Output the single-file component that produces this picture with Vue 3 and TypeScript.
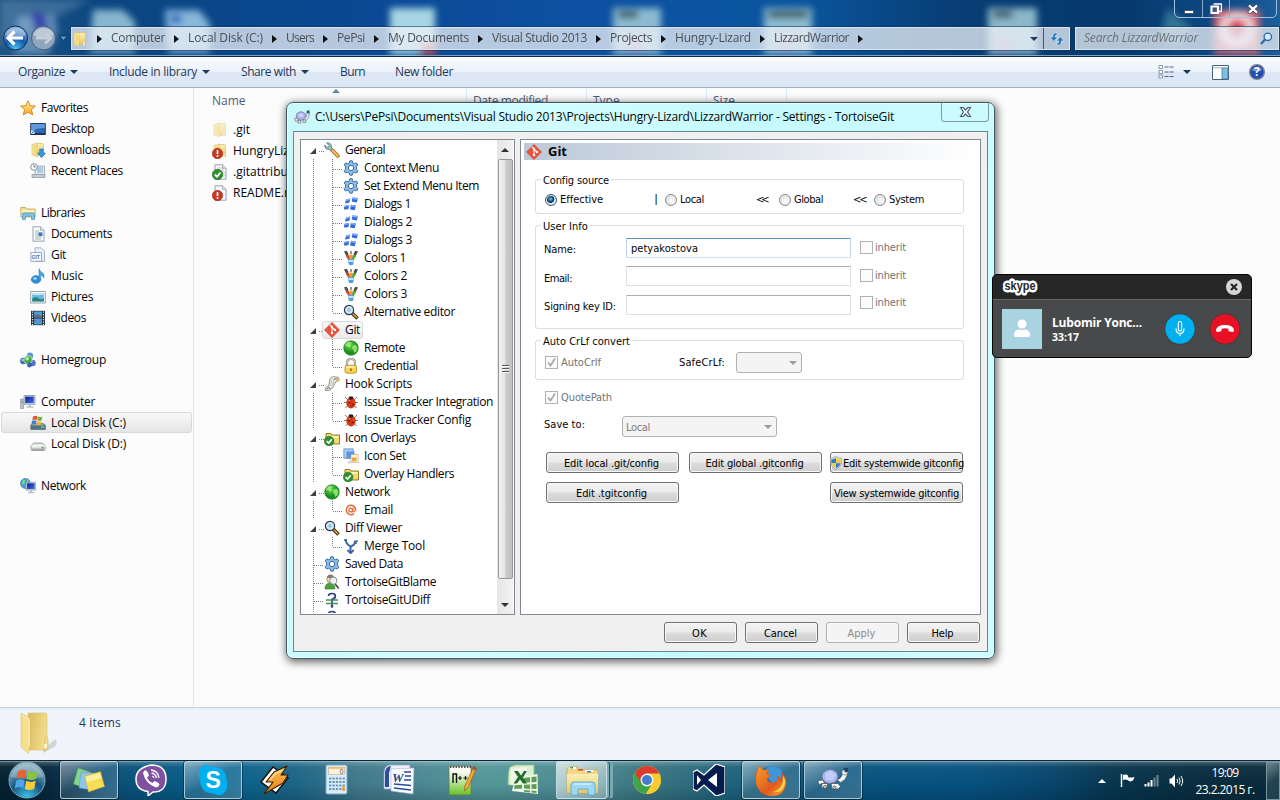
<script setup lang="ts">
import type { Directive } from 'vue'

/* Spreads a label's letters so that its ink fills the given cell, less one pixel of side bearing. */
const vFit: Directive<HTMLElement, number> = {
  mounted(el, { value }) {
    const count = (el.textContent ?? '').length
    if (value && count) {
      el.style.letterSpacing = (value - 1 - el.getBoundingClientRect().width) / count + 'px'
    }
  },
}

const folder =
  '<path d="M2 2.5 7.5 1v13.5L2 13z" fill="#f7e9a0" stroke="#d9c069" stroke-width=".6"/><path d="M7 1.5h5.5q1 0 1 1V13.500H7z" fill="url(#gFolder)" stroke="#d6b95c" stroke-width=".6"/><path d="M3.300 2.800 7 4.300V15.200L3.300 13.500z" fill="#f1d980"/><path d="M12 11v3.500" stroke="#fff" stroke-width="1"/>'
const alertBadge =
  '<circle cx="5.500" cy="10.500" r="5.200" fill="#c93a22" stroke="#9b2413" stroke-width=".6"/><path d="M5.500 7v4" stroke="#fff" stroke-width="1.700"/><circle cx="5.500" cy="13" r="1" fill="#fff"/>'
const okBadge =
  '<circle cx="5.500" cy="10.500" r="5.200" fill="#2f9130" stroke="#1a6a1d" stroke-width=".6"/><path d="M2.800 10.500 5 12.700 8.400 8.500" fill="none" stroke="#fff" stroke-width="1.800"/>'
const gear =
  '<path d="M6.800.8h2.400l.5 2.200 1.500.8 2.200-.8 1.300 2.100-1.300 1.700v2.400l1.500 1.500-1.200 2.100-2.300-.5-1.700.9-.6 2H6.900l-.6-2-1.700-.9-2.300.5-1.200-2.100 1.500-1.500V6.800L1.300 5.100 2.600 3l2.200.8L6.300 3z" fill="#8fbce8" stroke="#386ba6" stroke-width="1"/><circle cx="8" cy="8" r="2.700" fill="#fff" stroke="#386ba6"/>'
const dialogs =
  '<g fill="#3568dc"><path d="M3 3.500 7.300 2.500 6.300 6.800 2 7.500zM9.300 1.500l5.700.6-1.200 4.300-5-.8zM1.500 9.800l4.800-.8-1 4.200-4.500.4zM8 8.800l5 .8-1.300 4.600-4.700-.8z"/><path d="M3 3.500l4.300-1-.3 1.500-4.300.9zM9.300 1.500l5.700.6-.4 1.700-5.600-.7zM8 8.800l5 .8-.4 1.400-5-.7zM1.500 9.800l4.800-.8-.3 1.300-4.800.7z" fill="#86b0fb"/></g>'
const colors =
  '<path d="M1 1.500 3 .8l3.500 6-2.500 1zM15 1.500 13 .8 9.500 6.800l2.500 1z" fill="#5d5244"/><path d="M3.300 1 5 4M12.700 1 11 4M8 1v3" stroke="#333"/><path d="M3 5.500 6 4.700 7.500 10l-2 .5z" fill="#e2432e"/><path d="M6.500 4.500h3V10h-3z" fill="#f3a32b"/><path d="M13 5.500 10 4.700 8.500 10l2 .5z" fill="#58a935"/><path d="M4.800 9h6.400l-1 5.500q-2.200 1.300-4.400 0z" fill="#4f9de3"/><path d="M5.500 11h5" stroke="#d8efff" stroke-width="1.800"/>'
const magnifier =
  '<path d="m9 9 5.500 5.500" stroke="#35270c" stroke-width="3.600"/><path d="m9.500 9.500 4.500 4.300" stroke="#d9a23c" stroke-width="1.700"/><circle cx="6" cy="6" r="4.600" fill="#cfe8f7" stroke="#27394b" stroke-width="1.200"/><path d="M4 6h4M6 4v4" stroke="#6fa2c8" stroke-dasharray="1 .6"/>'
const gitLogo =
  '<path d="M8 .3 15.700 8 8 15.700.3 8z" fill="#e9533a" stroke="#cf4630" stroke-width=".4"/><path d="M5.700 2.700 8 5v6M8.300 5.500 11 8" stroke="#fff" stroke-width="1.100" fill="none"/><circle cx="8" cy="5" r="1.200" fill="#fff"/><circle cx="8" cy="11" r="1.200" fill="#fff"/><circle cx="10.900" cy="7.900" r="1.200" fill="#fff"/>'
const globe =
  '<circle cx="8" cy="8" r="7.300" fill="url(#gGlobe)" stroke="#1b7a18" stroke-width=".6"/><path d="M4 2.500q3-1 4.500.500L7 5l1 1.500-2.500 1L4 6 2 6.500q0-2.500 2-4zM9.500 6l3-1.500 2 3-1 4-2.500 1.500-.5-3L9 8.500z" fill="#a4f07c" opacity=".8"/>'
const bug =
  '<path d="M2 3l3 3M14 3l-3 3M1 8.500h3.500M15 8.500h-3.500M2.500 14 5 11M13.500 14 11 11" stroke="#6b5850" stroke-width=".8"/><ellipse cx="8" cy="9" rx="4.800" ry="5.400" fill="#dc3e1a"/><ellipse cx="8" cy="4" rx="2.600" ry="1.800" fill="#2c2220"/><path d="M8 5v9" stroke="#9d2610" stroke-width=".7"/><circle cx="6" cy="8.500" r=".9" fill="#5b1408"/><circle cx="10" cy="10.500" r=".9" fill="#5b1408"/><circle cx="6.500" cy="6.700" r=".8" fill="#ff9a7a"/>'
const folderOk =
  '<path d="M2 3.500h5l1 1.500h7.500v9H2z" fill="#f3d976" stroke="#8d6d14" stroke-width=".9"/><path d="M3 6h11.500v1.800H3z" fill="#fff3bb"/><g transform="translate(0 1.300) scale(.93)">' +
  okBadge +
  '</g>'
const page = '<path d="M3 .8h7.500L14 4.300v10.900H3z" fill="#fdfdfe" stroke="#8a97a6" stroke-width=".9"/><path d="M10.500.8v3.500H14" fill="#dfe6ee" stroke="#8a97a6" stroke-width=".7"/>'
const monitor =
  '<path d="M4 1.500h11v8.800H4z" fill="#d6dbe2" stroke="#7c8895" stroke-width=".7"/><path d="M5.200 2.600h8.600v6.500H5.200z" fill="url(#gScreen)"/><path d="M8.500 10.300h2.500v2.200H8.500zM6.500 12.500h7v1.300h-7z" fill="#b6bec8"/>'

const icons: Record<string, string> = {
  folder,
  gear,
  dialogs,
  colors,
  magnifier,
  gitLogo,
  globe,
  bug,
  folderOk,
  star: '<path d="M8 .8 10.100 5.600l5.300.5-4 3.500 1.300 5.300L8 12.100l-4.700 2.800 1.300-5.300-4-3.500 5.300-.5z" fill="url(#gStar)" stroke="#e08a1e" stroke-width="1"/>',
  desktop:
    '<path d="M.7 2.500h14.600v11H.7z" fill="#2f68ba" stroke="#2b3c55" stroke-width="1"/><path d="M1.200 3h13.600v4Q8 6.500 1.200 10z" fill="#5f9ade"/><path d="M.7 12.300h14.600v1.700H.7z" fill="#1e2c40"/><path d="M1 9.500h3.500V13H1z" fill="#cfe2f7"/><path d="M1.800 12.200l2-2" stroke="#2563b4"/>',
  downloads: folder + '<path d="M9.700 7h3.600v4h2.200l-4 4.700-4-4.700h2.200z" fill="#2d9be0" stroke="#156ba8" stroke-width=".6"/>',
  recent:
    '<path d="M5 3h9.500v9H5z" fill="#e9eef4" stroke="#8e9aa8" stroke-width=".8"/><path d="M7 5h6M7 7h6M7 9h6" stroke="#6ea6d0"/><path d="M2 11.500h13v3H2z" fill="#c6cdd5" stroke="#838e9a" stroke-width=".7"/><circle cx="4" cy="4" r="3.300" fill="#f8fafc" stroke="#8592a0"/><path d="M4 2v2h1.500" stroke="#555" stroke-width=".8" fill="none"/>',
  libraries:
    '<path d="M.8 2.500h5L7 4h8.200v8H.8z" fill="#f3df8f" stroke="#c4a149" stroke-width=".8"/><path d="M1.500 5h13v2h-13z" fill="#fbf1bd"/><path d="M2.500 14.500v-5q0-1.500 1.500-1.500h9q1.500 0 1.500 1.500v5h-3v-3.300h-6v3.300z" fill="#7cc4ea" stroke="#3f93c4" stroke-width=".7"/>',
  documents: page + '<path d="M5 5h4M5 7h7M5 9h3M5 11h7M5 13h6" stroke="#8c99a9" stroke-width=".8"/><path d="M8.500 6.500h4v3.500h-4z" fill="#3579c1"/>',
  git: '<path d="M5 .8h6L14.500 4v10.500H5z" fill="#e6eef8" stroke="#8ba4c4" stroke-width=".8"/><path d="M.8 5.500h10.700v8.800H.8z" fill="#f6f9fd" stroke="#7f9ac0" stroke-width=".8"/><text x="1.400" y="12" font-size="5.200" font-weight="bold" fill="#5878a8" font-family="Liberation Sans, sans-serif">GIT</text>',
  music:
    '<ellipse cx="6" cy="11.500" rx="4.700" ry="3.900" fill="#2b90da" stroke="#1769a8" stroke-width=".5"/><path d="M9 12V.6q1 3 3.700 4.400 2.500 1.500.8 5-.5-2.500-2.800-3V12z" fill="#45a6e6" stroke="#1769a8" stroke-width=".4"/><ellipse cx="5" cy="10.500" rx="2" ry="1.200" fill="#9dd6fa"/>',
  pictures:
    '<path d="M.7 2.500h14.600v11.500H.7z" fill="#fff" stroke="#8a97a6" stroke-width=".9"/><path d="M2.200 4h11.600v8.500H2.200z" fill="#65b8e8"/><path d="M2.200 9.500Q6 7 9 9.500t4.800-1v4H2.200z" fill="#2c8379"/><path d="M2.200 5.500q4 1.500 11.600 0V4H2.200z" fill="#c4e7fa"/>',
  videos:
    '<path d="M1 .8h14v14.400H1z" fill="#22303c"/><path d="M4 1.500h8v6H4zM4 8.500h8v6H4z" fill="#4e9bd8"/><path d="M4 5.500q4-3 8 1v1H4zM4 9q4 5 8 1v1.500H4z" fill="#7c4a44" opacity=".6"/><path d="M2.500 1.500v14M13.500 1.500v14" stroke="#e9eef2" stroke-dasharray="1.300 1.200" stroke-width="1.200"/>',
  homegroup:
    '<circle cx="10" cy="3.700" r="3.200" fill="#5a9bd8"/><circle cx="3.300" cy="9" r="3.200" fill="#3970bd"/><circle cx="12.500" cy="11" r="3.200" fill="#5272c8"/><circle cx="8" cy="8" r="4.200" fill="#46a846" stroke="#e9f5ee" stroke-width=".7"/><circle cx="7.200" cy="6.700" r="1.700" fill="#b9efa7"/><circle cx="9.500" cy="13" r="2.400" fill="#4160b4"/><circle cx="2.500" cy="8" r="1" fill="#bcdcff"/>',
  computer: monitor + '<path d="M.6 5h3v9.500h-3z" fill="#bcc5ce" stroke="#7c8895" stroke-width=".6"/><path d="M1.500 7h1v2h-1z" fill="#45b045"/>',
  diskC:
    '<path d="M.8 10 3 8.500h10L15.300 10v4.500H.8z" fill="#8ca0ac" stroke="#5c6d78" stroke-width=".7"/><path d="M.8 10.500h14.500v3.800H.8z" fill="#4d7683"/><path d="M11 12h3" stroke="#85e368" stroke-width="1.300"/><path d="M3 1.500q2.300-1.500 4.500-.2L6.800 5q-2-1-4.500.3z" fill="#e3572b"/><path d="M8 1.500q2 1 4.300.2L11.500 5.500q-2 .8-4.200-.2z" fill="#6eb33d"/><path d="M2 6q2.300-1.300 4.500-.2L5.900 9.300q-2-1-4.500.2z" fill="#3e82d4"/><path d="M7 6q2 1 4.300.2L10.600 9.700q-2 .7-4.200-.3z" fill="#f1b92c"/>',
  diskD:
    '<path d="M1 9.500 4 7h8l3 2.500v4q0 1-1 1H2q-1 0-1-1z" fill="#e3e5e4" stroke="#888d8d" stroke-width=".8"/><path d="M1 9.800h14" stroke="#fff"/><path d="M2 13.200h12" stroke="#9ba0a0" stroke-width="1.300"/><path d="M11.500 11.500h2" stroke="#58a038" stroke-width="1.500"/>',
  network:
    '<circle cx="5.500" cy="5.500" r="5" fill="#45a2d4" stroke="#2270a4" stroke-width=".6"/><path d="M3 1.500q3 1 1.500 3.500L2 7zM6 1q3 1 3 3L7 3z" fill="#85dc76"/><g transform="translate(2.500 3) scale(.88)">' +
    monitor +
    '</g>',
  file: page,
  fileOk: page + '<path d="M5 4h7M5 6h7M8 8h5M9 10h4M9 12h4" stroke="#a3abb4" stroke-width=".7"/>' + okBadge,
  fileAlert: page + alertBadge,
  folderAlert: folder + alertBadge,
  wrench:
    '<path d="M2.500.8 5 3.300 4.700 5 3 5.300.7 3Q.5 7.800 5.300 7.600L8 10l2-2-2.500-2.600Q8 .5 2.500.8z" fill="#9cc0c9" stroke="#4d7f8c" stroke-width=".8"/><path d="m8.500 8.500 5.300 5.300" stroke="#a56c1a" stroke-width="3.800" stroke-linecap="round"/><path d="m8.500 8.500 5.200 5.200" stroke="#f2b96a" stroke-width="2.300" stroke-linecap="round"/>',
  lock: '<path d="M4 8V5q0-4 4.200-4Q12 1 12 5v3" fill="none" stroke="#8c8c84" stroke-width="2.200"/><path d="M4 8V5q0-4 4.200-4Q12 1 12 5v3" fill="none" stroke="#deded4" stroke-width=".9"/><rect x="2" y="7.200" width="11.500" height="8" rx="2" fill="#f6d45a" stroke="#b38a1b" stroke-width=".8"/><path d="M3.500 9h8" stroke="#fff4b4" stroke-width="1.400"/><path d="M8 10.500v2.500" stroke="#8a6410" stroke-width="1.500"/>',
  script:
    '<path d="M6 2.500Q8-.5 14.500 1.500 16 5 12 5.500L8.500 12Q6 15.500 1.500 14.500.5 10.500 4.500 10.500z" fill="#e9e7e0" stroke="#85827a" stroke-width=".8"/><path d="M9.500 3.500q3-1.500 4.500 0M2.500 13q2-2 4-.5" fill="none" stroke="#75716a"/><path d="M8 4.500 6 9.500M10 5 8 9.500" stroke="#b8b4aa" stroke-width=".8"/><circle cx="14" cy="4" r="1.600" fill="#e0b25a"/>',
  iconSet:
    '<path d="M.8.800h9.500v9.500H.8z" fill="#a7c8f3" stroke="#7197cf" stroke-width=".8"/><path d="M3.500 3.500h8v7h-8z" fill="#5f94e0"/><path d="M8 6.500h7.200v8H8z" fill="#fff5dd" stroke="#b5a07a" stroke-width=".6"/><path d="M9 9.500h4.500v3.800H9z" fill="#f1a336"/><path d="M5 12.500l3 1.500v1.500H5z" fill="#c4d4ea"/>',
  at: '<circle cx="8" cy="8" r="4.600" fill="none" stroke="#e56a3e" stroke-width="1.600" stroke-dasharray="25 4" transform="rotate(50 8 8)"/><ellipse cx="7.700" cy="8" rx="1.800" ry="1.900" fill="none" stroke="#e56a3e" stroke-width="1.300"/><path d="m10.200 5.800-.6 3.500q.8 1.200 2.500-.5" fill="none" stroke="#e56a3e" stroke-width="1.300"/>',
  merge:
    '<path d="M2.500 1.500Q3 6 7.500 8.500V14M12.500 3.500Q12 6.500 8 8.500" fill="none" stroke="#3c66a2" stroke-width="2"/><path d="M4.500 12l3.100 3.200L10.700 12" fill="none" stroke="#3c66a2" stroke-width="1.800"/><path d="M1 2h3M11 3.500l4-.5M13 3v3" stroke="#3c66a2" stroke-width="1.300"/>',
  blame:
    '<path d="M1 15q0-6 5-6t5 6z" fill="#48a33c" stroke="#2d7526" stroke-width=".6"/><circle cx="6.500" cy="5" r="3.700" fill="#f2d9b8" stroke="#967248" stroke-width=".7"/><path d="M3 4q1-4 4-3.300Q10 1 10 4z" fill="#8b7a62"/><path d="m11.200 10 3.500 4.500" stroke="#444" stroke-width="1.600"/><circle cx="9.300" cy="6.700" r="3.600" fill="#eef6fb" fill-opacity=".85" stroke="#75808a" stroke-width=".9"/>',
  udiff:
    '<path d="M4.500 4Q4.500 1.500 8 1.500T11.300 4.500Q11 6.500 8 7.300V14M8 9v6" fill="none" stroke="#2c3c90" stroke-width="1.700"/><path d="M2 8h12M2 11.500h12" stroke="#3f9257" stroke-width="1.500"/><circle cx="8" cy="14.500" r="1.300" fill="#2c3c90"/>',
  turtle:
    '<ellipse cx="7" cy="7" rx="4.800" ry="4.200" fill="#a9b1e6" stroke="#6970a8" stroke-width=".7"/><path d="M10.500 9.500q2.500-1 2.500-6h2.500q.5 5-3.500 8z" fill="#e4e8ee" stroke="#73777d" stroke-width=".6"/><path d="M12.700 1.500h2.800v2.800h-2.800z" fill="#23577a"/><path d="M.5 9.500 3.500 9l1 2.500-3 1zM4 11.500h2.800V14H4zM9 11h2.800v2.500H9z" fill="#e4e6ea" stroke="#666" stroke-width=".6"/><path d="M4.500 5 8.500 4l1.300 3.700L5 8.500z" fill="#c9cff5"/>',
  shield:
    '<path d="M8 .6Q11 2.600 14.500 2.600 15 12 8 15.600 1 12 1.500 2.600 5 2.600 8 .6z" fill="#e6ebef" stroke="#84909a" stroke-width=".8"/><path d="M8 2.200v6H2.700Q2.400 6 2.700 3.900 5.800 3.800 8 2.200z" fill="#2d7dcb"/><path d="M8 2.200q2.200 1.600 5.300 1.700.3 2.100 0 4.300H8z" fill="#f6ce33"/><path d="M2.700 8.200H8v6Q3.800 12 2.700 8.200z" fill="#f6ce33"/><path d="M13.300 8.200H8v6q4.200-2.200 5.300-6z" fill="#2d7dcb"/>',
}

const large: Record<string, string> = {
  notes:
    '<path d="M5 4 17 8 12 24 .5 20z" fill="#86d58c" stroke="#4c9f58" stroke-width=".4"/><path d="M8 8 21 9 19 26 6 24z" fill="#8dc4f2" stroke="#4d87bb" stroke-width=".4"/><path d="m11.500 12 16-4.500 4 15L15.500 28z" fill="#f7dd55" stroke="#c9a62e" stroke-width=".5"/><path d="m12.500 13 14.500-4 1.500 5-14.500 4z" fill="#fdf0a4"/>',
  viber:
    '<path d="M16 1C26 1 31 5 31 15s-5 13-13 13l-5 4v-4.500Q1 26 1 15T16 1z" fill="#7d51a0" stroke="#fff" stroke-width="1.500"/><path d="M9 7q2-2 3.500 1l1.500 3q0 1-2 2.500 1.500 4 5.500 5.500l2-2q3 .8 5 3-.5 3-3.500 3.500Q10.500 20 8 9z" fill="#fff"/><path d="M16 6q7 .5 8 8M16.500 9q4 .5 5 5M17 12q1.500.5 2 2" fill="none" stroke="#fff" stroke-width="1.300"/>',
  skype:
    '<path d="M8 1q4 0 6 2 15-1 15.500 13 3 9-4 14.500-4 1.500-8-.8Q4 30 3 16-1 4 8 1z" fill="#00aff0"/><text x="16.200" y="24" text-anchor="middle" font-size="23" font-weight="bold" fill="#fff" font-family="Liberation Sans, sans-serif">S</text>',
  winamp:
    '<path d="M14 3 29 14 17 29 2 18z" fill="#fff" stroke="#111" stroke-width="1.500"/><path d="m28 2-13 6-8 10 7 0L5 30l19-11 5-8-7 0z" fill="url(#gBolt)" stroke="#3b2000" stroke-width="1.200" stroke-linejoin="round"/><path d="m24 6-8 4-5 6" stroke="#ffd993" stroke-width="1.700" fill="none"/>',
  calc: '<rect x="5" y="1" width="21" height="29" rx="1.500" fill="#dcecf7" stroke="#7ba6c8"/><rect x="7.500" y="3.500" width="16" height="7" fill="#fff2dc" stroke="#b9a88c" stroke-width=".6"/><path d="M7.500 4h16" stroke="#f2b76a" stroke-width="1.600"/><text x="18.500" y="10" font-size="7" fill="#555" font-family="Liberation Sans, sans-serif">0</text><path d="M8 14.500h16M8 18h16M8 21.500h16M8 25h16" stroke="#6797bf" stroke-width="2.200" stroke-dasharray="2.300 1.100"/><path d="M22.500 22v5" stroke="#f0a332" stroke-width="2.500"/>',
  word: '<path d="M6 1h21v24H1V9q0-6 5-8z" fill="#eef3fa" stroke="#8ba0c3" stroke-width=".8"/><path d="M2 8q1-6 6-6l-2 7v14H2z" fill="#2c4d9f"/><path d="m8 5 23-1-1 26-22-3z" fill="#fbfcfe" stroke="#a7b4cc" stroke-width=".6"/><path d="M21 8h7M22 12h6M21 16h7M11 20l17 1.500M11 24l17 2" stroke="#2b4a92" stroke-width="1.700"/><text x="9" y="17.500" font-size="13" font-weight="bold" font-style="italic" fill="#28488f" font-family="Liberation Serif, serif">W</text>',
  notepad:
    '<path d="M4 2h22v29H4z" fill="url(#gPad)" stroke="#66774d" stroke-width=".8"/><path d="M5 3h21" stroke="#555" stroke-width="2" stroke-dasharray="1.500 1.300"/><path d="M8 19v-9h3.500v9" fill="none" stroke="#111" stroke-width="1.400"/><path d="M13 14h4m-2-2v4M18.500 14h4m-2-2v4" stroke="#111" stroke-width="1.100"/><path d="m29 2 2.500 2L23 24l-3.500 3 .3-5z" fill="#f2a735" stroke="#9a6218" stroke-width=".7"/><path d="m28.500 2 3 2-1 2.500-3-1.500z" fill="#a8484c"/>',
  excel:
    '<path d="M3 3q5-3 12-2h12v20H1q0-15 2-18z" fill="#d9edcf" stroke="#8fb97e" stroke-width=".8"/><path d="m4 5 16-2v17L4 21z" fill="#f4f9f0" opacity=".8"/><path d="m8 14 22.500-4 .5 20L5 27z" fill="#eef6e9"/><path d="M17 14l6-.8v5l-6 .6zM24.500 13l5-.5V18l-5 .3zM7.500 21.200l7.500-.4v4L7 24.700zM17 20.700l6-.3v4.500l-6-.5zM24.500 20.300l5-.2v5l-5-.4zM17 26l6 .5v2l-6-.7zM24.500 26.500l5 .4v2l-5-.5z" fill="#5d9e52"/><path d="M7 7h4l3 4.500L17 7h3l-4 6.500 4 6h-4l-3-4-3 4H6.500L11 13z" fill="#236e2c"/>',
  explorer:
    '<path d="M1 7q0-4 2-4h8l2 3h17q2 0 2 2v21H1z" fill="#f4d881" stroke="#cda43f" stroke-width=".7"/><path d="M3 3h7v2H3zM19 6h8v2h-8z" fill="#fff"/><path d="M4 3h3v1.500H4z" fill="#35a145"/><path d="M12 5h5v1.500h-5z" fill="#d84b30"/><path d="M21 7h4v1.500h-4z" fill="#3782ca"/><path d="M1 10h31v19H1z" fill="url(#gFolder)"/><path d="M5 31V21q0-3 3-3h18q3 0 3 3v10h-7v-6H12v6z" fill="#9cd7f4" stroke="#5ba9d2" stroke-width=".9"/><path d="M8 20h17" stroke="#dff5ff" stroke-width="1.300"/>',
  chrome:
    '<circle cx="16" cy="16" r="14" fill="#f8cb2f"/><path d="M16 16 3.900 9A14 14 0 0 0 15 30l5-8z" fill="#3fa54a"/><path d="M16 9.500h12.300A14 14 0 0 0 3.900 9l5.700 9.500z" fill="#dc3b2f"/><path d="M16 16h14a14 14 0 0 1-15 14l5.500-9z" fill="#f8cb2f"/><circle cx="16" cy="16" r="6.500" fill="#f4f4f1"/><circle cx="16" cy="16" r="5" fill="#3f7fcd"/>',
  visualStudio:
    '<path d="m23 0 9 3v26l-9 3L11 21l-7 6-4-2V8l4-2 7 5z" fill="#071c4d" stroke="#fff" stroke-width="1.300"/><path d="m4 11 4 5-4 5zM24 9v14l-9-7z" fill="#fff"/>',
  firefox:
    '<circle cx="16.500" cy="15.500" r="13.500" fill="#286cb0"/><path d="M12 3q9-3 15 4 3 7-1 14L18 20 11 12z" fill="#3f96d8"/><path d="M2 7q1-4 3-5 1 3 4 4 3-1 5 0-3 2-1.500 4 3 0 3.500 2-3 1-4 3 1 4 6 4 6-1 5-7 3 2 3 6 2-4 0-10 6 5 5 12-2 12-14 12.500Q4 31 1 20 0 12 2 7z" fill="url(#gFox)" stroke="#c94c16" stroke-width=".5"/><path d="M28 12q1 13-10 16 9 2 12-8 1-4-2-8z" fill="#fbd14d"/>',
  tortoise:
    '<path d="M19.500 15.500q4.500 0 6-6l3-.5 2 1.500q-1.500 6-7 8z" fill="#f4f6f8" stroke="#555d66" stroke-width=".8"/><path d="M25 6.500l3.500-1 2.500 3-2 2.500-4-.5z" fill="#eef1f4" stroke="#555d66" stroke-width=".6"/><path d="M26.500 4h4.500v4l-3 .5z" fill="#1c4a6d"/><ellipse cx="13" cy="12.500" rx="8" ry="7" fill="#a9b6f0" stroke="#68739f" stroke-width=".8"/><path d="m8 10 6-3.500 5 4.500-3 5.500-7-.5z" fill="#c3cdfb"/><path d="M1 16.500l4.500-.5 2 2.500-2 1.500-4 .3zM4.500 19.500h6v4.500H5zM14 19.500h7l2.500 3-2.500 2.500h-6z" fill="#f3f4f6" stroke="#4e5359" stroke-width=".8"/><circle cx="8" cy="23" r="1.600" fill="#ccc" stroke="#444" stroke-width=".7"/><circle cx="17.500" cy="23.500" r="1.600" fill="#ccc" stroke="#444" stroke-width=".7"/>',
}

interface NavRow {
  label: string
  width: number
  icon?: string
  level?: number
  selected?: boolean
}
const gap: NavRow = { label: '', width: 0 }
const nav: NavRow[] = [
  { label: 'Favorites', width: 48, icon: 'star' },
  { label: 'Desktop', width: 44, icon: 'desktop', level: 1 },
  { label: 'Downloads', width: 60, icon: 'downloads', level: 1 },
  { label: 'Recent Places', width: 73, icon: 'recent', level: 1 },
  gap,
  { label: 'Libraries', width: 45, icon: 'libraries' },
  { label: 'Documents', width: 62, icon: 'documents', level: 1 },
  { label: 'Git', width: 16, icon: 'git', level: 1 },
  { label: 'Music', width: 33, icon: 'music', level: 1 },
  { label: 'Pictures', width: 43, icon: 'pictures', level: 1 },
  { label: 'Videos', width: 36, icon: 'videos', level: 1 },
  gap,
  { label: 'Homegroup', width: 66, icon: 'homegroup' },
  gap,
  { label: 'Computer', width: 55, icon: 'computer' },
  { label: 'Local Disk (C:)', width: 76, icon: 'diskC', level: 1, selected: true },
  { label: 'Local Disk (D:)', width: 76, icon: 'diskD', level: 1 },
  gap,
  { label: 'Network', width: 46, icon: 'network' },
]

const crumbs: [string, number][] = [
  ['Computer', 55],
  ['Local Disk (C:)', 76],
  ['Users', 29],
  ['PePsi', 29],
  ['My Documents', 82],
  ['Visual Studio 2013', 96],
  ['Projects', 43],
  ['Hungry-Lizard', 77],
  ['LizzardWarrior', 76],
]

const files: [string, string][] = [
  ['folder', '.git'],
  ['folderAlert', 'HungryLizard'],
  ['fileOk', '.gitattributes'],
  ['fileAlert', 'README.md'],
]

interface TreeRow {
  label: string
  width: number
  icon: string
  level: 0 | 1
  kind?: 'open' | 'leaf'
  last?: boolean
  selected?: boolean
}
const root = (label: string, width: number, icon: string, kind: 'open' | 'leaf' = 'open', selected = false): TreeRow => ({
  label,
  width,
  icon,
  level: 0,
  kind,
  selected,
})
const leaf = (label: string, width: number, icon: string, last = false): TreeRow => ({ label, width, icon, level: 1, last })
const tree: TreeRow[] = [
  root('General', 41, 'wrench'),
  leaf('Context Menu', 76, 'gear'),
  leaf('Set Extend Menu Item', 116, 'gear'),
  leaf('Dialogs 1', 48, 'dialogs'),
  leaf('Dialogs 2', 49, 'dialogs'),
  leaf('Dialogs 3', 49, 'dialogs'),
  leaf('Colors 1', 43, 'colors'),
  leaf('Colors 2', 44, 'colors'),
  leaf('Colors 3', 44, 'colors'),
  leaf('Alternative editor', 92, 'magnifier', true),
  root('Git', 16, 'gitLogo', 'open', true),
  leaf('Remote', 42, 'globe'),
  leaf('Credential', 55, 'lock', true),
  root('Hook Scripts', 68, 'script'),
  leaf('Issue Tracker Integration', 130, 'bug'),
  leaf('Issue Tracker Config', 108, 'bug', true),
  root('Icon Overlays', 72, 'folderOk'),
  leaf('Icon Set', 43, 'iconSet'),
  leaf('Overlay Handlers', 91, 'folderOk', true),
  root('Network', 46, 'globe'),
  leaf('Email', 30, 'at', true),
  root('Diff Viewer', 58, 'magnifier'),
  leaf('Merge Tool', 62, 'merge', true),
  root('Saved Data', 59, 'gear', 'leaf'),
  root('TortoiseGitBlame', 92, 'blame', 'leaf'),
  root('TortoiseGitUDiff', 86, 'udiff', 'leaf'),
  root('', 0, 'udiff', 'leaf'),
]

const userRows: { label: string; width: number; value: string }[] = [
  { label: 'Name:', width: 33, value: 'petyakostova' },
  { label: 'Email:', width: 29, value: '' },
  { label: 'Signing key ID:', width: 73, value: '' },
]

const footer: { label: string; width: number; off?: boolean }[] = [
  { label: 'OK', width: 16 },
  { label: 'Cancel', width: 34 },
  { label: 'Apply', width: 29, off: true },
  { label: 'Help', width: 23 },
]

const tasks: { icon: string; open?: boolean; stack?: boolean }[] = [
  { icon: 'notes', open: true },
  { icon: 'viber' },
  { icon: 'skype', open: true },
  { icon: 'winamp' },
  { icon: 'calc' },
  { icon: 'word' },
  { icon: 'notepad' },
  { icon: 'excel' },
  { icon: 'explorer', open: true, stack: true },
  { icon: 'chrome' },
  { icon: 'visualStudio' },
  { icon: 'firefox', open: true },
  { icon: 'tortoise', open: true },
]
</script>

<template>
  <div class="screen">
    <svg class="defs" width="0" height="0">
      <defs>
        <linearGradient id="gFolder" x2="0" y2="1"><stop offset="0" stop-color="#fbf0b4" /><stop offset="1" stop-color="#e6c768" /></linearGradient>
        <linearGradient id="gGold" x2="1" y2="0.3"><stop offset="0" stop-color="#d9b95e" /><stop offset="1" stop-color="#f2dd8c" /></linearGradient>
        <linearGradient id="gStar" x2="0" y2="1"><stop offset="0" stop-color="#fff3a5" /><stop offset="1" stop-color="#f9a51f" /></linearGradient>
        <linearGradient id="gScreen" x2="1" y2="1"><stop offset="0" stop-color="#0a1a9c" /><stop offset="1" stop-color="#3f6fe8" /></linearGradient>
        <linearGradient id="gBolt" x2="0" y2="1"><stop offset="0" stop-color="#ffc25a" /><stop offset="1" stop-color="#e87f12" /></linearGradient>
        <linearGradient id="gPad" x2="0" y2="1"><stop offset="0.200" stop-color="#fafcf4" /><stop offset="1" stop-color="#67c321" /></linearGradient>
        <linearGradient id="gFox" x2="1" y2="1"><stop offset="0" stop-color="#f5a02c" /><stop offset="0.600" stop-color="#e3591b" /><stop offset="1" stop-color="#f6b637" /></linearGradient>
        <radialGradient id="gGlobe" cx=".4" cy=".3"><stop offset="0" stop-color="#6fdc55" /><stop offset="1" stop-color="#1a8e1c" /></radialGradient>
        <radialGradient id="gBack" cx=".5" cy=".95" r=".9"><stop offset="0" stop-color="#45c4f2" /><stop offset="0.500" stop-color="#1457ae" /><stop offset="1" stop-color="#86aedb" /></radialGradient>
        <radialGradient id="gOrb" cx=".5" cy=".95" r=".9"><stop offset="0" stop-color="#3bc0e8" /><stop offset="0.500" stop-color="#15557f" /><stop offset="1" stop-color="#9bb9c8" /></radialGradient>
        <filter id="soft" x="-30%" y="-30%" width="160%" height="160%"><feGaussianBlur stdDeviation="3.500" /></filter>
      </defs>
    </svg>

    <section class="explorer">
      <header class="glass">
        <svg class="glow" width="1280" height="56" viewBox="0 0 1280 56">
          <g filter="url(#soft)">
            <path d="M0 0h90L0 46z" fill="#6b94b6" opacity=".45" />
            <path d="M18 16h36l4 14-10 24H14z" fill="#9fc0df" opacity=".55" />
            <path d="M30 12h12l8 14-14 8z" fill="#2328a5" opacity=".75" />
            <path d="M93 10h30l12 12v30H90z" fill="#a6d3e4" opacity=".8" />
            <path d="M165 10h34l11 14v28h-42z" fill="#a6d3ee" opacity=".8" />
            <path d="M170 14h12v10h-12z" fill="#2c6fc0" />
            <path d="M390 8h45v46h-45z" fill="#b8e6ec" opacity=".9" />
            <path d="M420 42h16v12h-16z" fill="#c9524f" />
            <path d="M613 8h48v46h-48zM764 8h48v46h-48zM988 8h49v46h-49z" fill="#a3ccd8" opacity=".85" />
            <path d="M618 11h20v7h-20zM768 11h40v7h-40zM993 11h20v7h-20z" fill="#1c4452" />
            <path d="M628 36h16v16h-16zM778 36h16v16h-16zM996 36h16v16h-16z" fill="#bd93bd" opacity=".6" />
            <path d="M1168 8 1192 28 1176 50 1160 36z" fill="#4f94a6" opacity=".6" />
            <path d="M1214 10h46v44h-46z" fill="#d8656f" />
            <circle cx="1237" cy="29" r="17" fill="#f3dce0" />
            <circle cx="1237" cy="29" r="10" fill="#d33b4c" />
          </g>
        </svg>
        <div class="caption">
          <i class="cap"><svg width="12" height="12"><path d="M1.500 7.500h9v3h-9z" fill="#fff" stroke="#334" stroke-width=".7" /></svg></i>
          <i class="cap"><svg width="12" height="12"><path d="M3.500 1h8v7.500h-3" fill="none" stroke="#fff" stroke-width="1.500" /><path d="M1.500 3.500h6.500v6.500h-6.500z" fill="none" stroke="#fff" stroke-width="2.200" /></svg></i>
          <i class="cap wide"><svg width="12" height="12"><path d="m1.500 2 8.500 8M10 2l-8.500 8" stroke="#345" stroke-width="3.600" /><path d="m2 2.300 8 7.400m0-7.400L2 9.700" stroke="#fff" stroke-width="2.300" /></svg></i>
        </div>
        <div class="navbar">
          <svg class="travel" width="68" height="28" viewBox="0 0 68 28">
            <circle cx="15.500" cy="14" r="12" fill="url(#gBack)" stroke="#0d2c55" />
            <path d="M5 11a11 10 0 0 1 21 0q-11 5-21 0z" fill="#fff" opacity=".35" />
            <path d="M8 14h15M14.500 7.500 8 14l6.500 6.500" fill="none" stroke="#fff" stroke-width="3.200" />
            <circle cx="43.500" cy="14" r="12" fill="#8fa6bd" stroke="#435c78" />
            <path d="M33 11a11 10 0 0 1 21 0q-11 5-21 0z" fill="#fff" opacity=".4" />
            <path d="M36 14h14M45 8.500l6 5.500-6 5.500" fill="none" stroke="#c3cfdb" stroke-width="2.800" />
            <path d="M59.500 12h8l-4 4.500z" fill="#4fa8dc" stroke="#0a2949" stroke-width=".8" />
          </svg>
          <div class="address">
            <svg class="ico" viewBox="0 0 16 16" v-html="icons.folder" />
            <b class="chev" />
            <template v-for="[name, w] in crumbs" :key="name">
              <span v-fit="w" class="t">{{ name }}</span><b class="chev" />
            </template>
            <b class="drop" />
            <span class="refresh"><svg width="16" height="16" viewBox="0 0 16 16"><path d="M8 1.500Q3.500 1.500 3.500 6H.8l4 4.500L8.700 6H6.200Q6.200 4 8 3.500zM8 14.500q4.500 0 4.500-4.500h2.700l-4-4.500L7.300 10h2.500q0 2-1.800 2.500z" fill="#2b7ac0" stroke="#eef6fc" stroke-width=".6" /></svg></span>
          </div>
          <div class="search">
            <span v-fit="115" class="t">Search LizzardWarrior</span>
            <svg width="13" height="13" viewBox="0 0 13 13"><path d="m1 12 4-4.500" stroke="#2d6cae" stroke-width="2.200" /><circle cx="7.800" cy="4.800" r="3.700" fill="#dceefb" stroke="#2d6cae" stroke-width="1.400" /></svg>
          </div>
        </div>
      </header>

      <div class="toolbar">
        <span v-fit="48" class="t">Organize</span><b class="drop" />
        <span v-fit="89" class="t second">Include in library</span><b class="drop" />
        <span v-fit="56" class="t second">Share with</span><b class="drop" />
        <span v-fit="26" class="t second">Burn</span>
        <span v-fit="59" class="t second">New folder</span>
        <div class="tools">
          <svg width="16" height="14" viewBox="0 0 16 14"><path d="M1 .500h3.500v3H1zM1 5.500h3.500v3H1zM1 10h3.500v3H1z" fill="#fff" stroke="#8794a8" /><path d="M6.500 2H16M6.500 7H16M6.500 11.500H16" stroke="#4c6787" stroke-width="1.200" stroke-dasharray="4 1" /></svg>
          <b class="drop" />
          <svg width="17" height="15" viewBox="0 0 17 15"><path d="M.500.500h16v14H.500z" fill="#fff" stroke="#4b6178" /><path d="M10 3h6v11h-6z" fill="#7dc2dd" stroke="#416f92" stroke-width=".7" /><path d="M1 2.800h15" stroke="#9ab0c5" /></svg>
          <svg width="16" height="16" viewBox="0 0 16 16"><circle cx="8" cy="8" r="7.300" fill="#234bb5" stroke="#79818d" stroke-width="1.400" /><path d="M3 6a5.500 5 0 0 1 10 0q-5 3-10 0z" fill="#9db8ee" opacity=".7" /><text x="8" y="12.200" text-anchor="middle" font-size="11.500" font-weight="bold" fill="#fff" font-family="Open Sans, sans-serif">?</text></svg>
        </div>
      </div>

      <div class="body">
        <nav class="side">
          <div v-for="(row, i) in nav" :key="i" class="navrow" :class="{ child: row.level, picked: row.selected }">
            <template v-if="row.icon">
              <svg class="ico" viewBox="0 0 16 16" v-html="icons[row.icon]" />
              <span v-fit="row.width" class="t">{{ row.label }}</span>
            </template>
          </div>
        </nav>
        <main class="list">
          <div class="heads">
            <span class="head name">Name<b class="sort" /></span>
            <span class="head mid"><span v-fit="76" class="t">Date modified</span></span>
            <span class="head mid">Type</span>
            <span class="head size">Size</span>
          </div>
          <div v-for="[icon, name] in files" :key="name" class="file">
            <svg class="ico" viewBox="0 0 16 16" :class="{ faded: icon === 'folder' }" v-html="icons[icon]" />
            <span class="t">{{ name }}</span>
          </div>
        </main>
      </div>

      <footer class="status">
        <svg width="44" height="46" viewBox="0 0 44 46">
          <path d="M24 38 36 27q4 4-1 8l-11 6z" fill="#999" opacity=".35" />
          <path d="M9 1h17q2 0 2 2v35H10z" fill="url(#gGold)" stroke="#d9bf6e" stroke-width=".6" />
          <path d="m2 1 9 5v28l-1.500 7.500L2 35z" fill="#f6e08c" stroke="#dcc16b" stroke-width=".6" />
          <path d="m3 3 7 4.500V34" fill="none" stroke="#fff3bb" />
          <path d="M26 25q3-1 3 3v9l-4 2z" fill="#f2da87" stroke="#cdb15d" stroke-width=".5" /><path d="M26.500 32v4" stroke="#fff" stroke-width="2" />
        </svg>
        <span v-fit="43" class="t">4 items</span>
      </footer>
    </section>

    <section class="dialog">
      <header class="title">
        <svg class="ico" viewBox="0 0 16 16" v-html="icons.turtle" />
        <span v-fit="580" class="t">C:\Users\PePsi\Documents\Visual Studio 2013\Projects\Hungry-Lizard\LizzardWarrior - Settings - TortoiseGit</span>
        <i class="close"><svg width="13" height="12" viewBox="0 0 13 12"><path d="M1.500 1.500h2.800L6.500 4l2.200-2.500h2.800L8.500 6l3 4.500H8.700L6.500 8l-2.200 2.500H1.500l3-4.500z" fill="#f3ffff" stroke="#4f5b69" stroke-width="1.200" /></svg></i>
      </header>
      <div class="client">
        <div class="panes">
          <div class="tree">
            <div class="rows">
              <div v-for="(row, i) in tree" :key="i" class="treerow">
                <svg class="guide" width="23" height="18" viewBox="0 0 23 18">
                  <path v-if="row.kind === 'open'" d="M9 13h6v-6z" fill="#404040" />
                  <path v-if="row.kind === 'open'" d="M18 10.500h5" class="dots" />
                  <path v-else d="M12.500 0v18" class="dots" />
                  <path v-if="row.kind === 'leaf'" d="M13 10.500h10" class="dots" />
                </svg>
                <svg v-if="row.level" class="guide" width="19" height="18" viewBox="0 0 19 18">
                  <path :d="row.last ? 'M8.500 0v10' : 'M8.500 0v18'" class="dots" /><path d="M9 10.500h10" class="dots" />
                </svg>
                <span class="node" :class="{ picked: row.selected }">
                  <svg class="ico" viewBox="0 0 16 16" v-html="icons[row.icon]" />
                  <span v-fit="row.width" class="t">{{ row.label }}</span>
                </span>
              </div>
            </div>
            <div class="scroll"><b class="up" /><div class="thumb"><i /><i /><i /></div><b class="down" /></div>
          </div>

          <div class="page">
            <div class="banner"><svg class="ico" viewBox="0 0 16 16" v-html="icons.gitLogo" /><span v-fit="20" class="t">Git</span></div>

            <div class="group source">
              <span class="legend"><span v-fit="67" class="t">Config source</span></span>
              <div class="radios">
                <label><i class="radio on" /><span v-fit="44" class="t">Effective</span></label>
                <b class="bar" />
                <label><i class="radio" /><span v-fit="25" class="t">Local</span></label>
                <span v-fit="18" class="t">&lt;&lt;</span>
                <label><i class="radio" /><span v-fit="30" class="t">Global</span></label>
                <span v-fit="18" class="t">&lt;&lt;</span>
                <label><i class="radio" /><span v-fit="36" class="t">System</span></label>
              </div>
            </div>

            <div class="group user">
              <span class="legend"><span v-fit="46" class="t">User Info</span></span>
              <div v-for="row in userRows" :key="row.label" class="field">
                <div class="cell"><span v-fit="row.width" class="t">{{ row.label }}</span></div>
                <div class="input" :class="{ focus: row.value }"><span v-fit="row.value ? 68 : 0" class="t">{{ row.value }}</span></div>
                <div class="inherit"><i class="check" /><span v-fit="32" class="t">inherit</span></div>
              </div>
            </div>

            <div class="group crlf">
              <span class="legend"><span v-fit="88" class="t">Auto CrLf convert</span></span>
              <div class="crlfrow">
                <label class="dim"><i class="check"><svg width="11" height="11"><path d="M2 5.500 4.500 8.500 9 1.500" fill="none" stroke="#a9a9a9" stroke-width="1.800" /></svg></i><span v-fit="41" class="t">AutoCrlf</span></label>
                <div class="safe"><span v-fit="47" class="t">SafeCrLf:</span></div>
                <div class="combo small"><b class="drop" /></div>
              </div>
            </div>

            <div class="quote dim"><i class="check"><svg width="11" height="11"><path d="M2 5.500 4.500 8.500 9 1.500" fill="none" stroke="#a9a9a9" stroke-width="1.800" /></svg></i><span v-fit="52" class="t">QuotePath</span></div>
            <div class="save">
              <div class="cell"><span v-fit="42" class="t">Save to:</span></div>
              <div class="combo"><span v-fit="25" class="t">Local</span><b class="drop" /></div>
            </div>
            <div class="edits">
              <div class="btn"><span v-fit="96" class="t">Edit local .git/config</span></div>
              <div class="btn"><span v-fit="99" class="t">Edit global .gitconfig</span></div>
              <div class="btn admin"><svg class="ico" viewBox="0 0 16 16" v-html="icons.shield" /><span v-fit="122" class="t">Edit systemwide gitconfig</span></div>
              <div class="btn"><span v-fit="72" class="t">Edit .tgitconfig</span></div>
              <div class="btn last"><span v-fit="126" class="t">View systemwide gitconfig</span></div>
            </div>
          </div>
        </div>
        <div class="actions">
          <div v-for="b in footer" :key="b.label" class="btn" :class="{ off: b.off }"><span v-fit="b.width" class="t">{{ b.label }}</span></div>
        </div>
      </div>
    </section>

    <section class="call">
      <header>
        <svg width="42" height="22" viewBox="0 0 42 22"><text x="4.500" y="14" font-size="13" textLength="31" lengthAdjust="spacingAndGlyphs" font-family="Liberation Sans, sans-serif" font-weight="bold" fill="#262626" stroke="#fff" stroke-width="5" stroke-linejoin="round" class="brand">skype</text></svg>
        <svg width="16" height="16" viewBox="0 0 16 16"><circle cx="8" cy="8" r="8" fill="#d6d6d6" /><path d="m5 5 6 6m0-6-6 6" stroke="#262626" stroke-width="2.200" /></svg>
      </header>
      <div class="talk">
        <svg width="40" height="40" viewBox="0 0 40 40"><path d="M0 0h40v40H0z" fill="#a9d3e1" /><circle cx="20" cy="15" r="4.500" fill="#fff" /><path d="M12 26q0-5 5-5.500 3 1.500 6 0 5 .5 5 5.500 0 2-1.500 2h-13Q12 28 12 26z" fill="#fff" /></svg>
        <div class="who"><span v-fit="91" class="t">Lubomir Yonc...</span><small v-fit="28" class="t">33:17</small></div>
        <svg class="round" width="32" height="32" viewBox="0 0 32 32"><circle cx="16" cy="16" r="15.500" fill="#3a3b3c" /><circle cx="16" cy="16" r="14.700" fill="#00aff0" /><rect x="14.300" y="8.500" width="3.400" height="9.500" rx="1.700" fill="none" stroke="#fff" stroke-width="1.100" /><path d="M12 15.500q0 5 4 5t4-5M16 20.500V23" fill="none" stroke="#fff" stroke-width="1.200" /></svg>
        <svg class="round" width="32" height="32" viewBox="0 0 32 32"><circle cx="16" cy="16" r="15.500" fill="#3a3b3c" /><circle cx="16" cy="16" r="14.700" fill="#e81123" /><path d="M7 17q1-5 9-5t9 5q0 2-1.500 2l-4-.8v-2.500q-3.500-1-7 0v2.500l-4 .8Q7 19 7 17z" fill="#fff" /></svg>
      </div>
    </section>

    <footer class="taskbar">
      <svg class="orb" width="40" height="40" viewBox="0 0 40 40">
        <circle cx="20" cy="20" r="18" fill="url(#gOrb)" stroke="#7ba6ba" stroke-width="1" />
        <path d="M3.500 17A17 16 0 0 1 36.500 17Q20 21 3.500 17z" fill="#d5e8f0" opacity=".3" />
        <path d="M11 11.500q4.500-3 8.500-1L18 18.500q-4-2-8.500.5z" fill="#ed6130" /><path d="M21 11q4.500 2.300 9.500 0L29 19q-5 2.300-9.500 0z" fill="#8ac43e" />
        <path d="M9 20.700q4.500-2.500 8.700-.5L16.300 28q-4-2-8.500.500z" fill="#4fa5e8" /><path d="M19.200 20.800q4.500 2.300 9.500 0L27.200 29q-5 2.200-9.500-.2z" fill="#fbcb36" />
      </svg>
      <div v-for="task in tasks" :key="task.icon" class="task" :class="{ open: task.open, stack: task.stack }">
        <svg width="32" height="32" viewBox="0 0 32 32" v-html="large[task.icon]" />
      </div>
      <div class="tray">
        <b class="more" />
        <svg width="15" height="15" viewBox="0 0 15 15"><path d="M1.500 1v13" stroke="#fff" stroke-width="1.500" /><path d="M3 2q3-1 5 .5V4q3 1 6.500 0-1 4-4 4.500-2-.2-3-1.500-2-1-4.500 0z" fill="#fff" /></svg>
        <svg width="16" height="13" viewBox="0 0 16 13"><path d="M1.500 10v2.500M4.500 8.500v4" stroke="#fff" stroke-width="2" /><path d="M7.500 6v6.500" stroke="#fff" stroke-width="2" /><path d="M10.500 3.500v9M13.500 1v11.500" stroke="#6f8994" stroke-width="2" /></svg>
        <svg width="15" height="14" viewBox="0 0 15 14"><path d="M.500 4.500h2l3.500-4v13l-3.500-4h-2z" fill="#fff" /><path d="M8 5q1.300 2 0 4M10 3.500q2.300 3.500 0 7M12 2q3.300 5 0 10" fill="none" stroke="#fff" stroke-width="1" /></svg>
        <div class="clock"><span v-fit="28" class="t">19:09</span><span v-fit="60" class="t">23.2.2015 г.</span></div>
        <i class="peek" />
      </div>
    </footer>
  </div>
</template>

<style>
body {
  margin: 0;
  overflow: hidden;
}
</style>

<style scoped>
.screen {
  position: relative;
  width: 1280px;
  height: 800px;
  overflow: hidden;
  display: flex;
  flex-direction: column;
  font: 12px/18px 'Open Sans', 'Noto Sans', sans-serif;
  color: #050505;
}
.screen * {
  box-sizing: border-box;
}
.defs {
  position: absolute;
}
svg {
  display: block;
  flex: none;
}
.t {
  display: inline-block;
  flex: none;
  white-space: pre;
}
.ico {
  width: 16px;
  height: 16px;
}
.drop {
  flex: none;
  width: 0;
  border: 4px solid transparent;
  border-top-color: #1e395b;
  border-bottom: 0;
}

/* Explorer window */
.explorer {
  flex: none;
  height: 760px;
  display: flex;
  flex-direction: column;
}
.glass {
  position: relative;
  height: 57px;
  background: linear-gradient(90deg, #1f5584 0, #0b4680 8%, #0a4791 25%, #0d51a2 45%, #0b569f 62%, #073f76 74%, #06396c 88%, #0d4c88 96%, #1c5f9c 100%);
  border-bottom: 1px solid #0b2a4c;
  box-shadow: inset 0 -1px #7fa2c4;
}
.glow {
  position: absolute;
  inset: 0;
}
.caption {
  position: absolute;
  top: -1px;
  left: 1174px;
  display: flex;
  height: 19px;
  border: 1px solid #a5bfd8;
  border-radius: 0 0 5px 5px;
}
.cap {
  width: 28px;
  display: flex;
  align-items: center;
  justify-content: center;
  border-right: 1px solid #8ca9c5;
}
.cap:nth-child(2) {
  width: 27px;
}
.cap.wide {
  width: 46px;
  border-right: 0;
}
.navbar {
  position: relative;
  display: flex;
  padding-top: 24px;
}
.travel {
  margin-right: 3px;
}
.address,
.search {
  height: 23px;
  margin-top: 3px;
  display: flex;
  align-items: center;
  background: rgba(235, 240, 247, 0.76);
  border: 1px solid #d9e5f0;
  box-shadow: 0 0 0 1px rgba(20, 50, 85, 0.55);
  color: #4a4f56;
}
.address {
  width: 999px;
}
.address > .t,
.search > .t {
  margin-top: -1px;
}
.chev {
  flex: none;
  margin: 0 9px;
  border: 4px solid transparent;
  border-left: 5px solid #111;
  border-right: 0;
}
.address > .drop {
  margin-left: auto;
  margin-right: 5px;
}
.refresh {
  align-self: stretch;
  width: 26px;
  display: flex;
  align-items: center;
  justify-content: center;
  border-left: 1px solid #41566f;
}
.search {
  width: 204px;
  margin-left: 5px;
  padding: 0 5px 0 8px;
  justify-content: space-between;
  font-style: italic;
  color: #6c7178;
}
.toolbar {
  height: 31px;
  display: flex;
  align-items: center;
  padding-left: 18px;
  color: #1e395b;
  background: linear-gradient(#fbfdff, #eaf1fa 50%, #dde7f5 51%, #dce6f4);
  border-bottom: 1px solid #a0afc3;
}
.toolbar > .drop {
  margin-left: 5px;
}
.toolbar .second {
  margin-left: 31px;
}
.toolbar > .second + .second {
  margin-left: 30px;
}
.tools {
  margin-left: auto;
  width: 122px;
  display: flex;
  align-items: center;
}
.tools > .drop {
  margin: 0 21px 0 9px;
}
.tools > svg:last-child {
  margin-left: 20px;
}
.body {
  flex: 1;
  display: flex;
  background: #fcfcfc;
}
.side {
  width: 194px;
  padding-top: 9px;
  border-right: 1px solid #d6e5f5;
}
.navrow {
  height: 21px;
  margin: 0 1px;
  padding-left: 19px;
  display: flex;
  align-items: center;
  gap: 5px;
  border: 0 solid #d9d9d9;
}
.navrow.child {
  padding-left: 29px;
}
.navrow.picked {
  padding-left: 28px;
  border-width: 1px;
  border-radius: 3px;
  background: linear-gradient(#f8f8f8, #e5e5e5);
}
.heads {
  height: 31px;
  display: flex;
  color: #4c607a;
  line-height: 25px;
}
.head {
  height: 20px;
  padding-left: 6px;
  border-right: 1px solid #dfeaf7;
}
.name {
  position: relative;
  width: 273px;
  padding-left: 18px;
}
.mid {
  width: 120px;
}
.size {
  width: 80px;
}
.sort {
  position: absolute;
  left: 138px;
  top: 1px;
  border: 4px solid transparent;
  border-bottom-color: #5f8aa3;
  border-top: 0;
}
.file {
  height: 21px;
  padding-left: 18px;
  display: flex;
  align-items: center;
  gap: 5px;
}
.faded {
  opacity: 0.6;
}
.status {
  height: 53px;
  display: flex;
  padding: 4px 0 0 19px;
  gap: 16px;
  color: #1e395b;
  background: linear-gradient(#e3ecf7, #f1f4fb 3px);
  border-top: 1px solid #c5d3e3;
}
.status .t {
  margin-top: 2px;
}

/* Settings dialog */
.dialog {
  position: absolute;
  left: 286px;
  top: 102px;
  width: 709px;
  height: 557px;
  padding: 0 7px 7px;
  background: linear-gradient(100deg, #c7f9fb, #d2fdff 30%, #c5fafd 60%, #d0fcff);
  border: 1px solid #3f5a64;
  border-radius: 7px;
  box-shadow: inset 0 0 0 1px #e6ffff, 1px 2px 9px 1px rgba(0, 0, 0, 0.6);
}
.title {
  height: 28px;
  display: flex;
  align-items: center;
}
.title .ico {
  margin: 0 5px 0 0;
}
.close {
  position: absolute;
  right: 5px;
  top: 0;
  width: 48px;
  height: 19px;
  display: flex;
  align-items: center;
  justify-content: center;
  border: 1px solid #7d9ba3;
  border-top: 0;
  border-radius: 0 0 4px 4px;
}
.client {
  width: 695px;
  height: 521px;
  margin-left: -1px;
  padding: 7px 6px;
  background: #f0f0f0;
  border: 1px solid #67868d;
  font: 11px/14px 'DejaVu Sans Condensed', 'Open Sans', sans-serif;
}
.panes {
  display: flex;
  gap: 5px;
}
.tree {
  width: 215px;
  height: 476px;
  display: flex;
  background: #fff;
  border: 1px solid #828790;
  font: 12px/18px 'Open Sans', 'Noto Sans', sans-serif;
}
.rows {
  width: 196px;
  height: 473px;
  padding-top: 1px;
  overflow: hidden;
}
.treerow {
  height: 18px;
  display: flex;
}
.dots {
  fill: none;
  stroke: #7d7d7d;
  stroke-dasharray: 1 1;
}
.node {
  display: flex;
  align-items: center;
  gap: 5px;
}
.node.picked {
  margin: 0 0 0 -2px;
  padding: 0 2px 0 1px;
  border: 1px solid #d9d9d9;
  border-radius: 3px;
  background: linear-gradient(#f9f9f9, #eaeaea);
}
.scroll {
  width: 16px;
  display: flex;
  flex-direction: column;
  align-items: center;
  background: linear-gradient(90deg, #e6e6e6, #f2f2f2);
}
.up,
.down {
  margin: 8px 0 7px;
  border: 4px solid transparent;
  border-bottom-color: #333;
  border-top: 0;
}
.down {
  margin: 24px 0 0;
  border-top: 4px solid #333;
  border-bottom: 0;
}
.thumb {
  width: 15px;
  height: 420px;
  display: flex;
  flex-direction: column;
  align-items: center;
  justify-content: center;
  gap: 1px;
  background: linear-gradient(90deg, #f4f4f4, #e3e3e3 45%, #c9cacd 55%, #c0c1c5);
  border: 1px solid #979797;
  border-radius: 2px;
}
.thumb i {
  width: 7px;
  height: 2px;
  border-top: 1px solid #555;
  background: #fff;
}
.page {
  width: 461px;
  height: 476px;
  padding-top: 3px;
  background: #fff;
  border: 1px solid #828790;
}
label .t,
.radios > .t,
.quote .t,
.safe .t,
.btn .t {
  padding-top: 1px;
}
.banner {
  width: 453px;
  height: 17px;
  margin-left: 3px;
  padding-left: 2px;
  display: flex;
  align-items: center;
  gap: 6px;
  background: linear-gradient(90deg, #bcc9d8, #fff);
  font: bold 13px/17px 'Open Sans', sans-serif;
}
.group {
  width: 429px;
  margin: 11px 0 0 14px;
  border: 1px solid #d5dfe5;
  border-radius: 3px;
}
.source {
  height: 35px;
  margin-top: 19px;
}
.user {
  height: 104px;
}
.crlf {
  height: 40px;
}
.legend {
  display: block;
  width: fit-content;
  height: 14px;
  margin: -7px 0 0 5px;
  padding: 0 2px;
  line-height: 16px;
  background: #fff;
}
.radios {
  display: grid;
  grid-template-columns: 110px 10px 91px 23px 74px 21px auto;
  justify-content: start;
  align-items: center;
  height: 14px;
  margin: 5px 0 0 9px;
}
label,
.inherit,
.quote {
  display: flex;
  align-items: center;
  gap: 3px;
}
.radio {
  width: 12px;
  height: 12px;
  border: 1px solid #858789;
  border-radius: 50%;
  background: radial-gradient(circle at 60% 60%, #f8f8f8 20%, #c9cdd0 90%);
  box-shadow: inset 0 0 0 1px #f1f1f1;
}
.radio.on {
  border-color: #315674;
  background: radial-gradient(circle at 45% 40%, #7fc8e8, #1c5985 28%, #0e3453 44%, #dce8f0 52%);
}
.bar {
  width: 2px;
  height: 11px;
  background: linear-gradient(90deg, #c4ad62 50%, #437ea8 50%);
}
.field {
  height: 29px;
  display: flex;
  padding-left: 8px;
}
.legend + .field {
  margin-top: 5px;
  height: 28px;
}
.cell {
  width: 82px;
  line-height: 24px;
}
.legend + .field + .field .cell {
  line-height: 25px;
}
.input {
  width: 225px;
  height: 20px;
  padding-left: 4px;
  line-height: 20px;
  border: 1px solid #dcdfe4;
  border-top-color: #abadb3;
  border-radius: 1px;
}
.input.focus {
  border-color: #5794bf #b7d5ea #c7e2f1;
}
.inherit {
  height: 19px;
  margin-left: 9px;
  gap: 2px;
  color: #737373;
}
.inherit .t {
  padding-top: 1px;
}
.field:last-child .inherit {
  margin-top: -2px;
}
.check {
  width: 13px;
  height: 13px;
  flex: none;
  border: 1px solid #b1b1b1;
  background: #fbfbfb;
}
.dim {
  color: #737373;
}
.crlfrow {
  height: 21px;
  margin: 4px 0 0 9px;
  display: flex;
  align-items: center;
}
.crlfrow label {
  width: 134px;
}
.safe {
  width: 57px;
}
.combo {
  width: 155px;
  height: 21px;
  padding: 0 4px 0 3px;
  display: flex;
  align-items: center;
  justify-content: space-between;
  color: #7d7d7d;
  background: #f4f4f4;
  border: 1px solid #adb2b5;
  border-radius: 3px;
}
.combo .t {
  padding-top: 2px;
}
.combo.small {
  width: 66px;
  justify-content: flex-end;
}
.combo .drop {
  border-top-color: #9b9b9b;
}
.quote {
  height: 13px;
  margin: 11px 0 0 24px;
}
.save {
  display: flex;
  margin: 12px 0 0 23px;
}
.save .cell {
  width: 78px;
  line-height: 17px;
}
.edits {
  display: grid;
  grid-template-columns: 133px 133px 133px;
  gap: 9px 10px;
  width: 419px;
  margin: 15px 0 0 25px;
}
.edits .admin,
.edits .last {
  margin-left: -2px;
  margin-right: 2px;
}
.edits .last {
  grid-column: 3;
}
.btn {
  height: 21px;
  display: flex;
  align-items: center;
  justify-content: center;
  color: #000;
  background: linear-gradient(#f3f3f3, #ebebeb 49%, #dcdcdc 51%, #cecece);
  border: 1px solid #707070;
  border-radius: 3px;
  box-shadow: inset 0 0 0 1px #f8f8f8;
}
.btn .t {
  padding-top: 2px;
}
.edits .btn {
  padding-right: 2px;
}
.edits .last {
  padding-right: 0;
}
.edits .admin {
  justify-content: flex-start;
}
.admin .ico {
  width: 14px;
  margin-left: -2px;
}
.actions {
  display: flex;
  gap: 8px;
  justify-content: flex-end;
  margin: 7px 1px 0 0;
}
.actions .btn {
  width: 73px;
  padding-right: 2px;
}
.btn.off {
  color: #8a8a8a;
  background: #f4f4f4;
  border-color: #adb2b5;
}

/* Call popup */
.call {
  position: absolute;
  left: 992px;
  top: 274px;
  width: 260px;
  height: 84px;
  background: #48494a;
  border: 1px solid #050505;
  border-radius: 5px;
  overflow: hidden;
  color: #fff;
}
.call header {
  height: 25px;
  padding: 0 9px 0 7px;
  display: flex;
  align-items: center;
  justify-content: space-between;
  background: #262626;
  border-bottom: 1px solid #686868;
}
.brand {
  paint-order: stroke;
}
.talk {
  display: flex;
  padding: 9px 0 0 9px;
}
.who {
  flex: none;
  width: 122px;
  height: 40px;
  padding: 5px 0 0 10px;
  display: flex;
  flex-direction: column;
  align-items: flex-start;
  font: bold 12px/17px 'Open Sans', sans-serif;
}
.who small {
  font-size: 10.5px;
  line-height: 13px;
}
.round {
  margin: 4px 13px 0 0;
}

/* Taskbar */
.taskbar {
  height: 40px;
  display: flex;
  gap: 4px;
  background:
    linear-gradient(rgba(255, 255, 255, 0.28), rgba(255, 255, 255, 0.04) 6px, rgba(0, 0, 0, 0) 60%, rgba(0, 20, 35, 0.2)),
    linear-gradient(90deg, #03202f 0, #06283d 4%, #0a4d74 8%, #07628e 18%, #1b6485 23%, #41788a 28%, #4c8893 33%, #549799 38%, #4c8a90 45%, #3a7480 51%, #1f637c 57%, #0d567d 63%, #06527f 69%, #06507e 76%, #07456c 82%, #07354d 87%, #082d3f 93%, #0a2b3a 100%);
  border-top: 1px solid #0b2733;
  box-shadow: inset 0 1px rgba(190, 225, 235, 0.4);
}
.orb {
  width: 40px;
  margin: -1px 9px 0 7px;
}
.task {
  width: 58px;
  height: 38px;
  display: flex;
  align-items: center;
  justify-content: center;
  border: 1px solid transparent;
  border-radius: 3px;
}
.task.open {
  border-color: rgba(205, 230, 238, 0.75);
  background: linear-gradient(150deg, rgba(255, 255, 255, 0.45), rgba(255, 255, 255, 0.12) 50%, rgba(255, 255, 255, 0.2));
  box-shadow: 0 0 0 1px rgba(0, 25, 40, 0.5);
}
.task.stack {
  width: 51px;
  margin-right: 7px;
  background: linear-gradient(150deg, rgba(255, 255, 255, 0.7), rgba(255, 255, 255, 0.3));
  box-shadow: 3px 0 0 -1px #7ba9b1, 4px 0 0 -1px #244e5b, 7px 0 0 -1px #7ba9b1;
}
.tray {
  margin-left: auto;
  width: 182px;
  display: flex;
  align-items: center;
}
.more {
  border: 4px solid transparent;
  border-bottom-color: #fff;
  border-top: 0;
  margin-right: 14px;
}
.tray > svg + svg {
  margin-left: 9px;
}
.clock {
  width: 88px;
  display: flex;
  flex-direction: column;
  align-items: center;
  color: #fff;
  line-height: 17px;
}
.peek {
  width: 14px;
  height: 38px;
  margin-left: auto;
  border: 1px solid #7b959e;
  background: linear-gradient(145deg, #6d858e, #234450 50%, #1c3d4a);
  flex: none;
}
</style>
